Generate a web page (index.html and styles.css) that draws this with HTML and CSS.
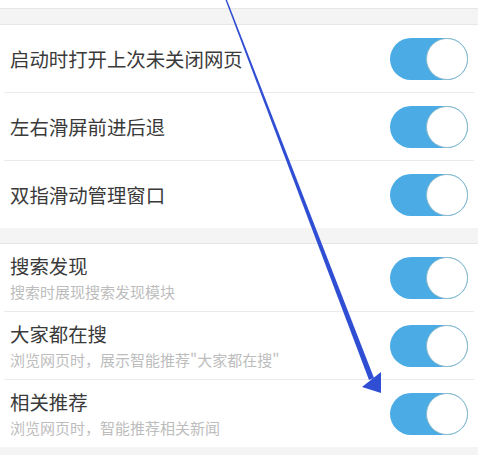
FILE: index.html
```html
<!DOCTYPE html>
<html lang="zh-CN">
<head>
    <meta charset="UTF-8">
    <meta name="viewport" content="width=device-width, initial-scale=1.0">
    <title>设置</title>
    <link rel="stylesheet" href="styles.css">
</head>
<body>

<div class="sisa"></div>
<div class="jeda"></div>

<div class="grup">
    <div class="baris">
        <div class="teks"><div class="judul">启动时打开上次未关闭网页</div></div>
        <div class="saklar"><span class="bulat"></span></div>
    </div>
    <div class="baris">
        <div class="teks"><div class="judul">左右滑屏前进后退</div></div>
        <div class="saklar"><span class="bulat"></span></div>
    </div>
    <div class="baris">
        <div class="teks"><div class="judul">双指滑动管理窗口</div></div>
        <div class="saklar"><span class="bulat"></span></div>
    </div>
</div>

<div class="jeda"></div>

<div class="grup">
    <div class="baris">
        <div class="teks">
            <div class="judul">搜索发现</div>
            <div class="ket">搜索时展现搜索发现模块</div>
        </div>
        <div class="saklar"><span class="bulat"></span></div>
    </div>
    <div class="baris">
        <div class="teks">
            <div class="judul">大家都在搜</div>
            <div class="ket">浏览网页时，展示智能推荐"大家都在搜"</div>
        </div>
        <div class="saklar"><span class="bulat"></span></div>
    </div>
    <div class="baris">
        <div class="teks">
            <div class="judul">相关推荐</div>
            <div class="ket">浏览网页时，智能推荐相关新闻</div>
        </div>
        <div class="saklar"><span class="bulat"></span></div>
    </div>
</div>

<div class="jeda"></div>

<!-- panah penunjuk di atas konten -->
<svg class="panah" width="478" height="455" viewBox="0 0 478 455">
    <polygon points="225.5,0 227,0 374,378 369,380" fill="#2f4ed4"/>
    <polygon points="362,387 381,372 381,393" fill="#2f4ed4"/>
</svg>

</body>
</html>
```

FILE: styles.css
```css
body {
    margin: 0;
    width: 478px;
    height: 455px;
    overflow: hidden;
    background: #ffffff;
    font-family: "Noto Sans CJK SC", "Noto Sans", sans-serif;
    position: relative;
}
.sisa {
    height: 8px;
    border-bottom: 1px solid #e6e6e6;
}
.jeda {
    height: 15px;
    background: #f4f4f4;
    border-bottom: 1px solid #e6e6e6;
}
.grup {
    background: #ffffff;
}
.baris {
    display: flex;
    align-items: center;
    justify-content: space-between;
    height: 67px;
    margin: 0 4px;
    padding: 0 6px;
    border-bottom: 1px solid #ebebeb;
}
.grup .baris:last-child {
    border-bottom: none;
    margin: 0;
    padding: 0 10px;
    height: 67px;
}
.judul {
    font-size: 19.4px;
    color: #3a3a3a;
    line-height: 26px;
}
.ket {
    font-size: 15px;
    color: #bdbdbd;
    line-height: 20px;
    margin-top: 3px;
}
.saklar {
    width: 78px;
    height: 42px;
    border-radius: 21px;
    background: #4aabe5;
    display: flex;
    justify-content: flex-end;
    margin-right: 0;
}
.grup .baris:last-child .saklar {
    margin-right: 0;
}
.bulat {
    width: 40px;
    height: 40px;
    border-radius: 50%;
    background: #ffffff;
    border: 1px solid #8fbccc;
}
.panah {
    position: absolute;
    left: 0;
    top: 0;
}
```
